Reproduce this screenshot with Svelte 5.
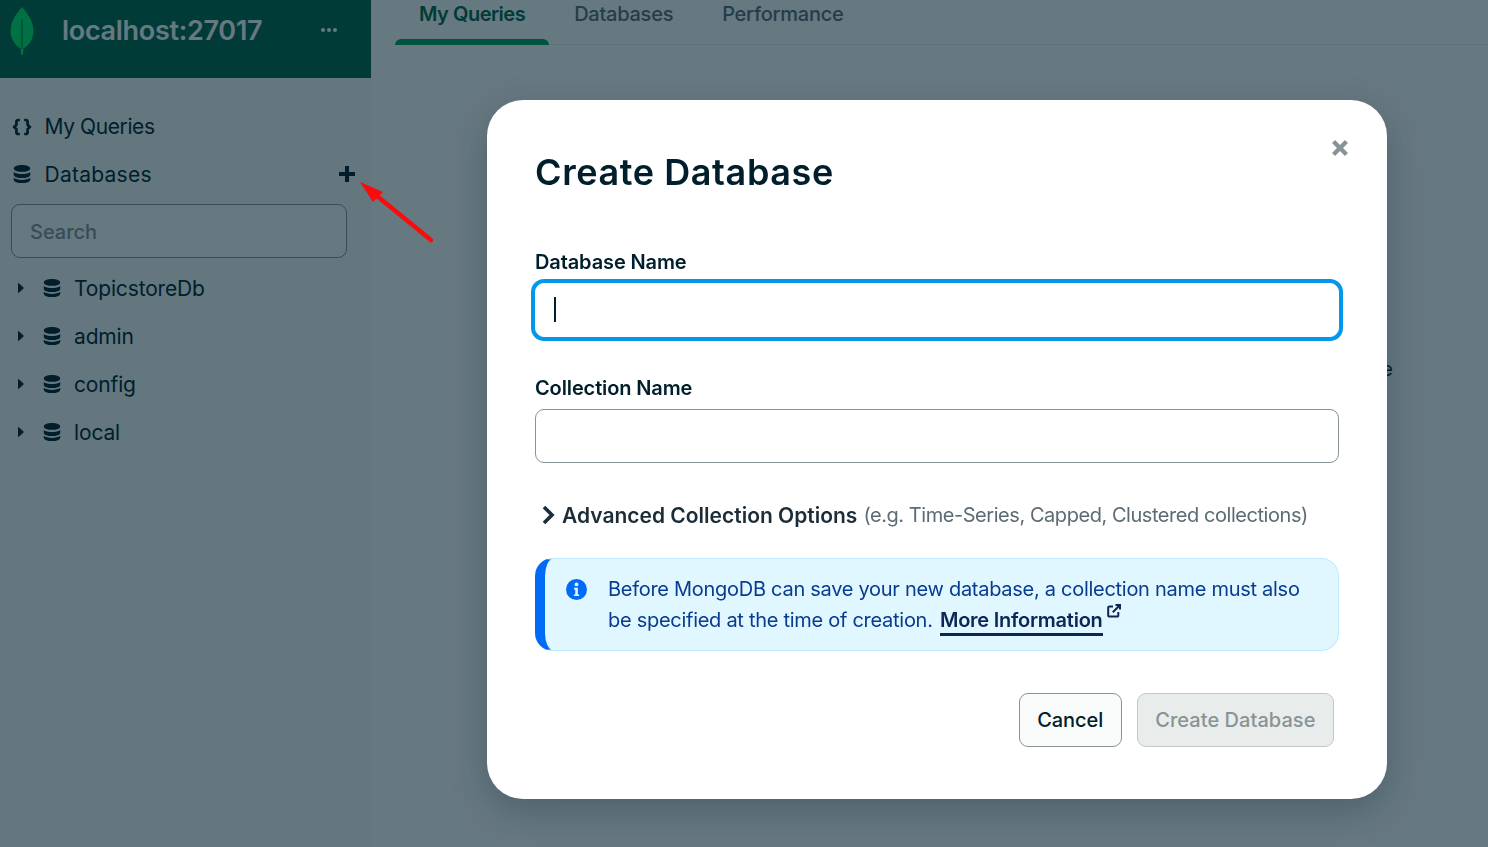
<script lang="ts">
  const databases = ['TopicstoreDb', 'admin', 'config', 'local'];
  const tabs = ['My Queries', 'Databases', 'Performance'];
  const dbPath = 'M1.400 3.500C1.400 1.900 4.300.800 8 .800s6.600 1.100 6.600 2.700S11.700 6.200 8 6.200 1.400 5.100 1.400 3.500zM1.400 6.300C2.700 7.400 5.200 8 8 8s5.300-.6 6.600-1.700v2.200C14.600 10.100 11.700 11.200 8 11.200S1.400 10.100 1.400 8.500V6.300zM1.400 11c1.300 1.100 3.800 1.700 6.600 1.700s5.300-.6 6.600-1.700v1.500c0 1.600-2.900 2.700-6.600 2.700s-6.600-1.100-6.600-2.700V11z';
</script>

<div class="shell">
  <aside class="sidebar">
    <header class="conn">
      <svg class="leaf" viewBox="0 0 24 48" width="24" height="48" aria-hidden="true">
        <path d="M12 0C7 6 .5 14 .5 24c0 8 4.500 14 10 17.500l.7 6.500h1.600l.7-6.500c5.500-3.500 10-9.500 10-17.500C23.500 14 17 6 12 0z" fill="#00ed64" />
        <path d="M12 12v30" stroke="#00684a" stroke-width="1" />
      </svg>
      <span class="host">localhost:27017</span>
      <span class="dots"><i></i><i></i><i></i></span>
    </header>

    <nav class="nav">
      <div class="nav-row">
        <svg viewBox="0 0 20 20" width="20" height="20" fill="none" stroke="#001e2b" stroke-width="2.700" stroke-linejoin="round" aria-hidden="true">
          <path d="M7.800 4H6.400Q4.400 4 4.400 5.800V9L2 11l2.400 2v3.200Q4.400 18 6.400 18h1.400M12.200 4h1.400q2 0 2 1.800V9L18 11l-2.400 2v3.200q0 1.800-2 1.800h-1.400" />
        </svg>
        <span>My Queries</span>
      </div>
      <div class="nav-row">
        <svg viewBox="0 0 16 16" width="20" height="20" fill="#001e2b" aria-hidden="true"><path d={dbPath} /></svg>
        <span class="wide">Databases</span>
        <svg class="plus" viewBox="0 0 18 18" width="18" height="18" fill="#001e2b" aria-hidden="true">
          <path d="M7 1h4v6h6v4h-6v6H7v-6H1V7h6z" />
        </svg>
      </div>
    </nav>

    <input class="search" type="text" placeholder="Search" />

    <ul class="tree">
      {#each databases as db}
        <li>
          <svg viewBox="0 0 8 12" width="8" height="12" fill="#001e2b" stroke="#001e2b" stroke-width="1" stroke-linejoin="round" aria-hidden="true"><path d="M1.500 1.500L6.500 6l-5 4.500z" /></svg>
          <svg class="db" viewBox="0 0 16 16" width="20" height="20" fill="#001e2b" aria-hidden="true"><path d={dbPath} /></svg>
          <span>{db}</span>
        </li>
      {/each}
    </ul>
  </aside>

  <main class="content">
    <div class="tabs">
      {#each tabs as tab, i}
        <div class="tab" class:active={i === 0}>{tab}</div>
      {/each}
    </div>
    <p class="empty">Your saved queries will appear here once you save one</p>
  </main>
</div>

<div class="backdrop">
  <div class="modal">
    <svg class="close" viewBox="0 0 16 16" width="18" height="18" fill="#889397" aria-hidden="true">
      <path d="M3.600.9L8 5.300 12.400.9l2.700 2.700L10.700 8l4.400 4.400-2.700 2.700L8 10.700l-4.400 4.400-2.700-2.700L5.300 8 .9 3.600z" />
    </svg>
    <h1>Create Database</h1>

    <div class="field">
      <label for="db-name">Database Name</label>
      <div class="input-wrap">
        <input id="db-name" class="focused" type="text" />
        <span class="caret"></span>
      </div>
    </div>

    <div class="field second">
      <label for="coll-name">Collection Name</label>
      <input id="coll-name" type="text" />
    </div>

    <div class="advanced">
      <svg viewBox="0 0 14 20" width="14" height="20" fill="none" stroke="#1c2d38" stroke-width="3.600" aria-hidden="true">
        <path d="M3 2l8 8-8 8" />
      </svg>
      <strong>Advanced Collection Options</strong>
      <span>(e.g. Time-Series, Capped, Clustered collections)</span>
    </div>

    <div class="banner">
      <svg class="info" viewBox="0 0 20 20" width="21" height="21" aria-hidden="true">
        <circle cx="10" cy="10" r="10" fill="#016bf8" />
        <circle cx="10" cy="5.200" r="1.800" fill="#e1f7ff" />
        <path d="M7.600 8.300h3.700v6.400h1.200v1.600H7.500v-1.600h1.300v-4.800H7.600z" fill="#e1f7ff" />
      </svg>
      <p>
        Before MongoDB can save your new database, a collection name must also be specified at the time of creation.
        <a href="#more">More Information</a><svg class="ext" viewBox="0 0 14 14" width="14" height="14" fill="none" stroke="#0c2657" stroke-width="2" aria-hidden="true">
          <path d="M6 2.500H2.500A1.200 1.200 0 0 0 1.200 3.700v7.600a1.200 1.200 0 0 0 1.300 1.300h7.600a1.200 1.200 0 0 0 1.200-1.300V8M5.800 8.200L12.500 1.500M8.500 1h4.500v4.500" />
        </svg>
      </p>
    </div>

    <div class="actions">
      <button class="btn">Cancel</button>
      <button class="btn primary" disabled>Create Database</button>
    </div>
  </div>
</div>

<svg class="arrow" viewBox="0 0 90 80" width="90" height="80" aria-hidden="true">
  <path d="M71 58L17 14" stroke="#f80c0c" stroke-width="4.500" stroke-linecap="round" />
  <path d="M0 0L23 10 13 20z" fill="#f80c0c" />
</svg>

<style>
  :global(body) {
    margin: 0;
    overflow: hidden;
    background: #fff;
    font-family: Inter, 'Liberation Sans', sans-serif;
    color: #001e2b;
  }
  .shell { display: flex; height: 847px; }

  .sidebar { width: 371px; flex: none; background: #f9fbfa; }
  .conn { display: flex; align-items: center; height: 78px; padding: 0 34px 18px 10px; box-sizing: border-box; background: #00684a; color: #fff; }
  .leaf { flex: none; margin-top: 2px; }
  .host { margin-left: 28px; font-size: 27px; font-weight: 600; letter-spacing: -0.3px; }
  .dots { display: flex; gap: 2px; margin-left: auto; }
  .dots i { width: 4px; height: 4px; border-radius: 50%; background: #fff; }

  .nav { padding-top: 24px; }
  .nav-row { display: flex; align-items: center; gap: 12.500px; height: 48px; padding-left: 12px; font-size: 21px; letter-spacing: -0.4px; }
  .nav-row .wide { letter-spacing: 0.25px; }
  .plus { margin-left: auto; margin-right: 15px; }

  .search { display: block; width: 336px; height: 54px; margin: 6px 0 0 11px; padding: 2px 18px 0; box-sizing: border-box; border: 1px solid #889397; border-radius: 9px; background: #fff; font: inherit; font-size: 20px; font-weight: 500; }
  .search::placeholder { color: #889397; opacity: 1; }

  .tree { list-style: none; margin: 6px 0 0; padding: 0; }
  .tree li { display: flex; align-items: center; height: 48px; padding-left: 17px; font-size: 21px; letter-spacing: -0.15px; }
  .tree .db { margin: 0 12px 0 17px; }

  .content { flex: 1; position: relative; padding-left: 24px; }
  .tabs { display: flex; gap: 1px; height: 45px; box-sizing: border-box; border-bottom: 1px solid #e8edeb; }
  .tab { padding: 0 24px; font-size: 20px; font-weight: 500; line-height: 29px; color: #5c6c75; letter-spacing: -0.25px; position: relative; }
  .tab.active { color: #00684a; font-weight: 600; letter-spacing: -0.5px; }
  .tab.active::after { content: ''; position: absolute; left: 0; right: 0; bottom: -1px; height: 6px; border-radius: 6px 6px 0 0; background: #00a35c; }
  .empty { margin: 311px 0 0; padding-right: 95px; text-align: right; font-size: 20px; line-height: 26px; }

  .backdrop { position: fixed; inset: 0; background: rgba(0, 30, 43, 0.6); padding: 100px 0 0 487px; box-sizing: border-box; }
  .modal { position: relative; width: 900px; height: 699px; box-sizing: border-box; padding: 48px 48px 0; background: #fff; border-radius: 36px; box-shadow: 0 12px 36px rgba(0, 30, 43, 0.25); }
  .close { position: absolute; top: 39px; right: 38px; }
  h1 { margin: 0; font-size: 36px; line-height: 48px; font-weight: 600; letter-spacing: 0.6px; }

  .field { margin-top: 54px; }
  .field.second { margin-top: 39px; }
  label { display: block; font-size: 20px; line-height: 24px; font-weight: 600; letter-spacing: -0.12px; margin-bottom: 9px; }
  .field input { display: block; width: 804px; height: 54px; box-sizing: border-box; border: 1px solid #889397; border-radius: 9px; padding: 0 18px; background: #fff; }
  .field input.focused { border-color: #fff; box-shadow: 0 0 0 4px #0498ec; }
  .input-wrap { position: relative; }
  .caret { position: absolute; left: 19px; top: 14px; width: 2px; height: 25px; background: #001e2b; }

  .advanced { display: flex; align-items: center; margin-top: 38px; height: 28px; padding-left: 6px; color: #1c2d38; }
  .advanced strong { margin-left: 7px; font-size: 21px; font-weight: 600; letter-spacing: 0; }
  .advanced span { margin-left: 6px; font-size: 20px; color: #5c6c75; letter-spacing: -0.45px; white-space: nowrap; }

  .banner { display: flex; gap: 21px; margin-top: 29px; height: 93px; box-sizing: border-box; padding: 16px 20px 0 21px; background: #e1f7ff; border: 1px solid #c3e7fe; border-left: 10px solid #016bf8; border-radius: 18px; color: #083c90; }
  .info { flex: none; margin-top: 4px; }
  .banner p { margin: 0; font-size: 20px; line-height: 29px; letter-spacing: -0.28px; }
  .banner a { margin-left: 2px; color: #0c2657; font-weight: 600; letter-spacing: -0.25px; text-decoration: none; border-bottom: 3px solid #0c2657; padding-bottom: 1px; }
  .ext { margin-left: 4px; vertical-align: 9px; }

  .actions { display: flex; justify-content: flex-end; gap: 15px; margin-top: 42px; padding-right: 5px; }
  .btn { height: 54px; padding: 0 17.500px; border: 1px solid #889397; border-radius: 9px; background: #f9fbfa; color: #001e2b; font: inherit; font-size: 20px; font-weight: 500; letter-spacing: -0.05px; }
  .btn.primary { border-color: #c1c7c6; background: #e8edeb; color: #889397; letter-spacing: 0.05px; }

  .arrow { position: fixed; left: 360px; top: 182px; }
</style>
